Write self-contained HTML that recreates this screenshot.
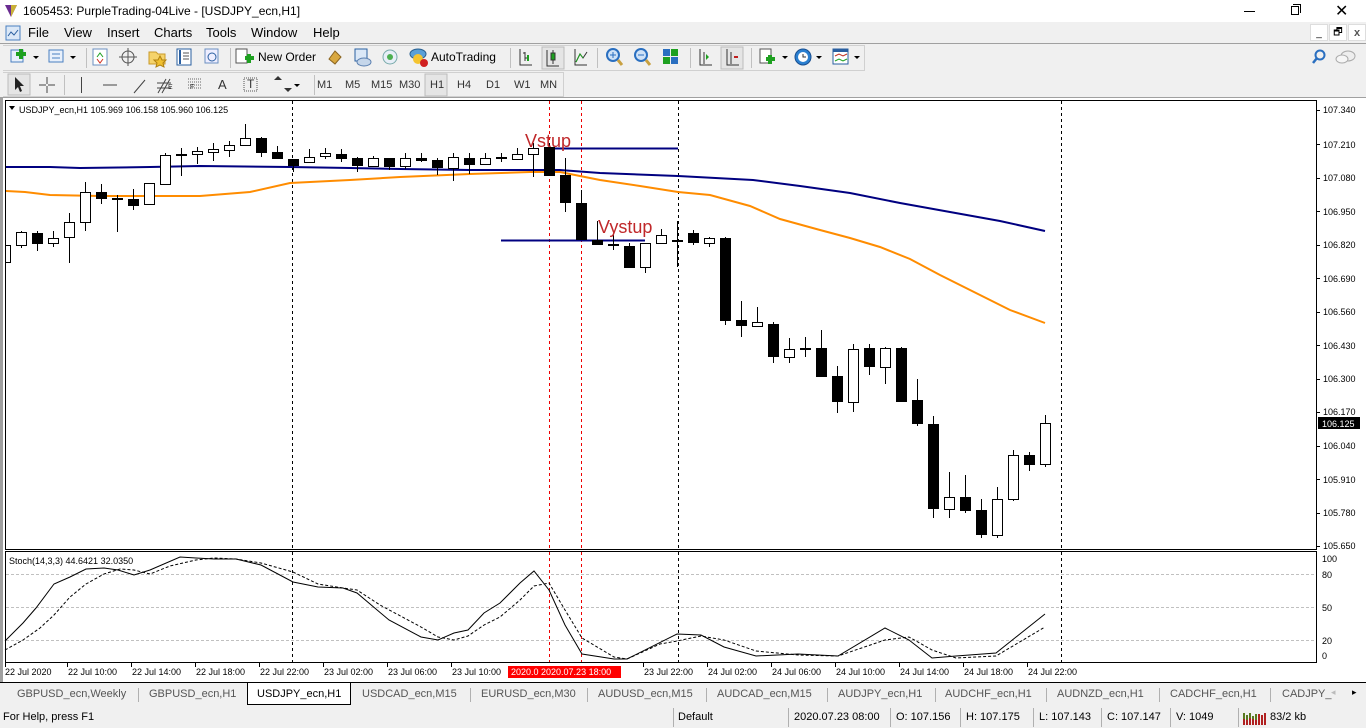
<!DOCTYPE html>
<html><head><meta charset="utf-8">
<style>
*{margin:0;padding:0;box-sizing:border-box}
body{width:1366px;height:728px;overflow:hidden;background:#f0f0f0;font-family:"Liberation Sans",sans-serif;position:relative}
.a{position:absolute;white-space:nowrap}
.t{font-size:12px;color:#000}
.m{font-size:13px;color:#000}
.tab{font-size:11px;color:#555}
.st{font-size:11px;color:#000}
.sep{position:absolute;width:1px;background:#b0b0b0}
</style></head><body>
<div class="a" style="left:0;top:0;width:1366px;height:22px;background:#fff"></div>
<svg class="a" style="left:4px;top:4px" width="14" height="14"><polygon points="1,1 13,1 7,13" fill="#6a2c91"/><polygon points="7,1 13,1 7,13" fill="#c9b037"/></svg>
<div class="a t" style="left:23px;top:4px">1605453: PurpleTrading-04Live - [USDJPY_ecn,H1]</div>
<div class="a" style="left:1244px;top:11px;width:11px;height:1px;background:#000"></div>
<div class="a" style="left:1291px;top:6px;width:8px;height:9px;border:1px solid #000"></div>
<div class="a" style="left:1293px;top:4px;width:8px;height:9px;border-top:1px solid #000;border-right:1px solid #000"></div>
<div class="a" style="left:1335px;top:1px;font-size:16px">✕</div>
<svg class="a" style="left:5px;top:25px" width="16" height="16"><rect x="1" y="1" width="14" height="14" fill="#dbe8f7" stroke="#4a7fc1"/><path d="M3 11l3-4 3 3 4-5" stroke="#2a5fa0" fill="none"/></svg>
<div class="a m" style="left:28px;top:25px">File</div>
<div class="a m" style="left:64px;top:25px">View</div>
<div class="a m" style="left:107px;top:25px">Insert</div>
<div class="a m" style="left:154px;top:25px">Charts</div>
<div class="a m" style="left:206px;top:25px">Tools</div>
<div class="a m" style="left:251px;top:25px">Window</div>
<div class="a m" style="left:313px;top:25px">Help</div>
<div class="a" style="left:1310px;top:24px;width:18px;height:17px;background:#fff;border:1px solid #ddd;font-size:10px;text-align:center;line-height:18px">_</div>
<div class="a" style="left:1329px;top:24px;width:18px;height:17px;background:#fff;border:1px solid #ddd;font-size:10px;text-align:center;line-height:15px">🗗</div>
<div class="a" style="left:1348px;top:24px;width:18px;height:17px;background:#fff;border:1px solid #ddd;font-size:11px;text-align:center;line-height:16px;font-weight:bold;color:#555">x</div>
<div class="a" style="left:0;top:43px;width:1366px;height:1px;background:#a0a0a0"></div>
<div class="a" style="left:3px;top:45px;width:862px;height:26px;border:1px solid #d0d0d0;border-left:none"></div>
<svg class="a" style="left:0;top:44px" width="870" height="28">
 <g fill="none" stroke-width="1">
 <rect x="11" y="6" width="12" height="12" fill="#e8f0fb" stroke="#4a7fc1"/><path d="M16 10h10M21 5v10" stroke="#1ea020" stroke-width="4"/>
 <path d="M33 12l3 3 3-3z" fill="#000"/>
 <rect x="49" y="6" width="14" height="12" fill="#e8f0fb" stroke="#4a7fc1"/><path d="M52 10h8M52 14h8" stroke="#4a7fc1"/>
 <path d="M70 12l3 3 3-3z" fill="#000"/>
 <rect x="93" y="5" width="14" height="16" fill="#fff" stroke="#6b8fc1"/><path d="M97 13l3-4 3 4" stroke="#1ea020"/><path d="M97 15l3 4 3-4" stroke="#d03020"/>
 <circle cx="128" cy="13" r="6" stroke="#555"/><path d="M128 4v18M119 13h18" stroke="#555"/>
 <path d="M149 8h7l2 2h7v10h-16z" fill="#f5d36b" stroke="#c99a2a"/><path d="M160 12l2 4 4 0-3 3 1 4-4-2-4 2 1-4-3-3h4z" fill="#f0c030" stroke="#b08010"/>
 <rect x="177" y="5" width="14" height="16" fill="#fff" stroke="#2a5fa0"/><path d="M180 6v14" stroke="#2a5fa0" stroke-width="2"/><path d="M183 9h6M183 12h6M183 15h6" stroke="#555"/>
 <rect x="205" y="5" width="13" height="14" fill="#eef" stroke="#6b8fc1"/><circle cx="212" cy="13" r="4" stroke="#2a5fa0"/>
 <rect x="236" y="5" width="11" height="14" fill="#fff" stroke="#555"/><path d="M245 14h9M249 10v9" stroke="#1ea020" stroke-width="4"/>
 <path d="M329 15l6-8 6 6-6 7z" fill="#d9a840" stroke="#8a6420"/>
 <rect x="355" y="5" width="12" height="12" fill="#dbe8f7" stroke="#2a5fa0"/><ellipse cx="364" cy="18" rx="7" ry="4" fill="#c5d6ea" stroke="#5a7fb0"/>
 <circle cx="390" cy="13" r="7" fill="#e7eef7" stroke="#7aa"/><circle cx="390" cy="13" r="3" fill="#4caf50"/>
 <ellipse cx="418" cy="10" rx="8" ry="5" fill="#5aa0d8" stroke="#2a6090"/><circle cx="418" cy="15" r="5" fill="#f4c430"/><circle cx="424" cy="19" r="4" fill="#d02020"/>
 <path d="M520 5v16h12M525 8v9M523 9h2M525 14h2" stroke="#333"/><path d="M528 11v6" stroke="#1ea020" stroke-width="2"/>
 <rect x="542" y="3" width="22" height="22" fill="#e5e5e5" stroke="#bbb"/><path d="M547 6v16h12M553 6v14" stroke="#333"/><rect x="551" y="9" width="4" height="7" fill="#1ea020" stroke="#333"/>
 <path d="M575 5v16h12M576 18l4-8 3 4 4-6" stroke="#333"/><path d="M576 18l4-8 3 4" stroke="#1ea020"/>
 <circle cx="613" cy="11" r="6" fill="#cfe2f7" stroke="#2a6fc0" stroke-width="2"/><path d="M618 16l4 5" stroke="#c8a040" stroke-width="3"/><path d="M610 11h6M613 8v6" stroke="#2a6fc0"/>
 <circle cx="641" cy="11" r="6" fill="#cfe2f7" stroke="#2a6fc0" stroke-width="2"/><path d="M646 16l4 5" stroke="#c8a040" stroke-width="3"/><path d="M638 11h6" stroke="#2a6fc0"/>
 <rect x="663" y="5" width="7" height="7" fill="#2a6fc0"/><rect x="671" y="5" width="7" height="7" fill="#1ea020"/><rect x="663" y="13" width="7" height="7" fill="#1ea020"/><rect x="671" y="13" width="7" height="7" fill="#2a6fc0"/>
 <path d="M700 5v16h12M704 8v12" stroke="#333"/><path d="M706 10l3 3-3 3z" fill="#1ea020"/>
 <rect x="721" y="3" width="22" height="22" fill="#e5e5e5" stroke="#bbb"/><path d="M727 5v16h12M731 8v12" stroke="#333"/><path d="M738 13h-4" stroke="#c02020" stroke-width="2"/>
 <rect x="760" y="5" width="11" height="14" fill="#fff" stroke="#555"/><path d="M766 15h9M770 11v9" stroke="#1ea020" stroke-width="4"/>
 <path d="M782 12l3 3 3-3z" fill="#000"/>
 <circle cx="803" cy="13" r="8" fill="#2a7fd0" stroke="#1a4f90"/><circle cx="803" cy="13" r="5" fill="#fff"/><path d="M803 10v3h3" stroke="#333"/>
 <path d="M816 12l3 3 3-3z" fill="#000"/>
 <rect x="833" y="5" width="15" height="15" fill="#fff" stroke="#2a5fa0"/><rect x="833" y="5" width="15" height="3" fill="#2a5fa0"/><path d="M835 12l4-2 4 2 4-2" stroke="#c03020"/><path d="M835 17l4-2 4 2 4-2" stroke="#1ea020"/>
 <path d="M854 12l3 3 3-3z" fill="#000"/>
 </g>
 <g stroke="#c0c0c0"><path d="M86.5 4v20M230.5 4v20M510.5 4v20M597.5 4v20M690.5 4v20M751.5 4v20"/></g>
</svg>
<div class="a t" style="left:258px;top:50px">New Order</div>
<div class="a t" style="left:431px;top:50px">AutoTrading</div>
<svg class="a" style="left:1310px;top:48px" width="50" height="20"><circle cx="10" cy="7" r="4.5" fill="none" stroke="#2a6fc0" stroke-width="2"/><path d="M7 10l-4 5" stroke="#2a6fc0" stroke-width="2.5"/><ellipse cx="38" cy="8" rx="7" ry="5" fill="#eee" stroke="#aaa"/><ellipse cx="32" cy="11" rx="6" ry="4" fill="#f6f6f6" stroke="#aaa"/></svg>
<div class="a" style="left:3px;top:72px;width:561px;height:25px;border:1px solid #d0d0d0;border-left:none"></div>
<svg class="a" style="left:0;top:72px" width="570" height="26">
 <rect x="8" y="2" width="22" height="21" fill="#e5e5e5" stroke="#bbb"/>
 <path d="M15 5v13l3-3 2 5 2-1-2-5h4z" fill="#222"/>
 <path d="M47 5v7M47 14v7M39 13h7M48 13h7" stroke="#444"/>
 <path d="M64.5 3v20M314.5 3v20" stroke="#c0c0c0"/>
 <path d="M81.5 5v16M103 13h14M134 21l11-13" stroke="#444"/>
 <path d="M158 21l8-14M162 21l8-14M157 11h14M157 16h14" stroke="#444"/>
 <path d="M188 7h14M188 10h14M188 13h14M188 16h14" stroke="#666" stroke-dasharray="1,1"/>
 <rect x="244" y="6" width="13" height="13" fill="none" stroke="#555" stroke-dasharray="1,1"/>
 <path d="M274 8l4-4 4 4zM284 16l4 4 4-4z" fill="#333"/><path d="M294 12l3 3 3-3z" fill="#000"/>
 <rect x="425" y="2" width="22" height="22" fill="#e5e5e5" stroke="#bbb"/>
</svg>
<div class="a" style="left:218px;top:77px;font-size:13px;color:#333">A</div>
<div class="a" style="left:247px;top:77px;font-size:12px;color:#333">T</div>
<div class="a" style="left:190px;top:84px;font-size:7px;color:#333">F</div>
<div class="a" style="left:168px;top:84px;font-size:7px;color:#333">E</div>
<div class="a t" style="left:317px;top:79px;font-size:11px;color:#333">M1</div>
<div class="a t" style="left:345px;top:79px;font-size:11px;color:#333">M5</div>
<div class="a t" style="left:371px;top:79px;font-size:11px;color:#333">M15</div>
<div class="a t" style="left:399px;top:79px;font-size:11px;color:#333">M30</div>
<div class="a t" style="left:430px;top:79px;font-size:11px;color:#333">H1</div>
<div class="a t" style="left:457px;top:79px;font-size:11px;color:#333">H4</div>
<div class="a t" style="left:486px;top:79px;font-size:11px;color:#333">D1</div>
<div class="a t" style="left:514px;top:79px;font-size:11px;color:#333">W1</div>
<div class="a t" style="left:540px;top:79px;font-size:11px;color:#333">MN</div>
<div class="a" style="left:0;top:97px;width:1366px;height:1px;background:#a0a0a0"></div>
<div class="a" style="left:0;top:98px;width:1366px;height:584px;background:#fff"></div>
<div class="a" style="left:0;top:98px;width:3px;height:584px;background:#a0a0a0"></div>
<svg class="a" style="left:0;top:0" width="1366" height="728" font-family="Liberation Sans, sans-serif">
 <defs><clipPath id="c1"><rect x="6" y="101" width="1310" height="448"/></clipPath></defs>
 <rect x="5.5" y="100.5" width="1311" height="449" fill="#fff" stroke="#000"/>
 <rect x="5.5" y="551.5" width="1311" height="111" fill="#fff" stroke="#000"/>
 <g stroke="#c0c0c0" stroke-dasharray="3,2"><path d="M6 574.5H1316M6 607.5H1316M6 640.5H1316"/></g>
 <g stroke="#000" stroke-dasharray="3,3"><path d="M292.5 101V549M678.5 101V549M1061.5 101V549M292.5 552V662M678.5 552V662M1061.5 552V662"/></g>
 <g stroke="#e00" stroke-dasharray="3,3"><path d="M549.5 101V549M581.5 101V549M549.5 552V662M581.5 552V662"/></g>
 <g clip-path="url(#c1)">
 <polyline fill="none" stroke="#ff8c00" stroke-width="2" points="5,191 25,192 50,195 100,196 155,196 200,196 250,192 290,183 350,180 400,177 470,174 530,172 560,172 600,180 640,186 678,192 710,195 750,206 780,219 820,230 850,238 880,247 910,259 940,275 970,290 1010,310 1045,323"/>
 <polyline fill="none" stroke="#000080" stroke-width="2" points="5,167 50,167 80,168 150,167 200,166 290,167 350,168 400,169 470,170 530,170 560,170 600,173 678,176 753,180 800,186 850,193 900,203 950,212 1000,221 1045,231"/>
 <path d="M546 148.5H678M501 240.5H645" stroke="#000080" stroke-width="2"/>
 <path stroke="#000" d="M5.5 243V264M21.5 231V248M37.5 231V251M53.5 231V247M69.5 213V263M85.5 182V231M101.5 184V204M117.5 195V232M133.5 189V210M149.5 183V205M165.5 153V185M181.5 148V176M197.5 147V164M213.5 143V161M229.5 141V157M245.5 124V145M261.5 137V157M277.5 146V159M293.5 159V172M309.5 149V162M325.5 148V159M341.5 149V162M357.5 157V172M373.5 156V166M389.5 158V170M405.5 153V169M421.5 153V162M437.5 158V175M453.5 153V181M469.5 153V174M485.5 153V164M501.5 153V162M517.5 148V159M533.5 143V177M549.5 143V176M565.5 158V212M581.5 190V240M597.5 221V245M613.5 233V250M629.5 243V268M645.5 243V273M661.5 229V243M677.5 221V267M693.5 230V245M709.5 237V247M725.5 237V325M741.5 301V337M757.5 307V327M773.5 322V363M789.5 338V363M805.5 337V357M821.5 330V377M837.5 366V413M853.5 344V412M869.5 344V375M885.5 347V384M901.5 347V402M917.5 379V426M933.5 416V518M949.5 472V518M965.5 475V513M981.5 499V538M997.5 487V538M1013.5 450V501M1029.5 452V471M1045.5 415V467"/>
 <g fill="#000">
 <rect x="32" y="233" width="11" height="11"/><rect x="96" y="192" width="11" height="7"/><rect x="128" y="199" width="11" height="7"/><rect x="256" y="138" width="11" height="15"/><rect x="272" y="152" width="11" height="7"/><rect x="288" y="159" width="11" height="7"/><rect x="336" y="154" width="11" height="5"/><rect x="352" y="158" width="11" height="8"/><rect x="384" y="158" width="11" height="9"/><rect x="416" y="158" width="11" height="3"/><rect x="432" y="160" width="11" height="8"/><rect x="464" y="158" width="11" height="7"/><rect x="544" y="147" width="11" height="29"/><rect x="560" y="175" width="11" height="28"/><rect x="576" y="203" width="11" height="37"/><rect x="592" y="240" width="11" height="5"/><rect x="624" y="246" width="11" height="22"/><rect x="688" y="233" width="11" height="10"/><rect x="720" y="238" width="11" height="83"/><rect x="736" y="320" width="11" height="6"/><rect x="768" y="324" width="11" height="33"/><rect x="816" y="348" width="11" height="29"/><rect x="832" y="376" width="11" height="26"/><rect x="864" y="348" width="11" height="19"/><rect x="896" y="348" width="11" height="54"/><rect x="912" y="400" width="11" height="24"/><rect x="928" y="424" width="11" height="85"/><rect x="960" y="497" width="11" height="14"/><rect x="976" y="510" width="11" height="25"/><rect x="1024" y="455" width="11" height="10"/>
 </g>
 <g fill="#fff" stroke="#000">
 <rect x="0.5" y="245.5" width="10" height="17"/><rect x="16.5" y="232.5" width="10" height="13"/><rect x="48.5" y="238.5" width="10" height="5"/><rect x="64.5" y="222.5" width="10" height="15"/><rect x="80.5" y="192.5" width="10" height="30"/><rect x="144.5" y="183.5" width="10" height="21"/><rect x="160.5" y="155.5" width="10" height="29"/><rect x="192.5" y="151.5" width="10" height="3"/><rect x="208.5" y="149.5" width="10" height="3"/><rect x="224.5" y="145.5" width="10" height="5"/><rect x="240.5" y="138.5" width="10" height="7"/><rect x="304.5" y="157.5" width="10" height="5"/><rect x="320.5" y="153.5" width="10" height="3"/><rect x="368.5" y="158.5" width="10" height="8"/><rect x="400.5" y="158.5" width="10" height="8"/><rect x="448.5" y="157.5" width="10" height="11"/><rect x="480.5" y="158.5" width="10" height="6"/><rect x="512.5" y="154.5" width="10" height="5"/><rect x="528.5" y="148.5" width="10" height="6"/><rect x="640.5" y="243.5" width="10" height="24"/><rect x="656.5" y="235.5" width="10" height="8"/><rect x="704.5" y="238.5" width="10" height="5"/><rect x="752.5" y="322.5" width="10" height="4"/><rect x="784.5" y="349.5" width="10" height="8"/><rect x="848.5" y="349.5" width="10" height="53"/><rect x="880.5" y="348.5" width="10" height="19"/><rect x="944.5" y="497.5" width="10" height="12"/><rect x="992.5" y="499.5" width="10" height="36"/><rect x="1008.5" y="455.5" width="10" height="44"/><rect x="1040.5" y="423.5" width="10" height="41"/>
 </g>
 <path stroke="#000" stroke-width="2" d="M112 199H123M176 155H187M496 158H507M608 245H619M672 241H683M800 349H811"/>
 <text x="525" y="147" font-size="18" fill="#c0282a">Vstup</text>
 <text x="598" y="233" font-size="18" fill="#c0282a">Vystup</text>
 </g>
 <polyline fill="none" stroke="#000" points="5,641 23,623 36,608 54,584 70,577 86,569 104,568 118,570 134,575 150,570 180,557 196,558 214,559 236,559 261,565 293,582 318,587 343,588 357,593 389,620 421,637 438,640 454,633 468,630 484,613 500,603 520,583 534,571 549,590 565,625 582,654 614,659 627,659 677,634 701,635 724,647 756,656 798,654 838,656 885,628 909,640 932,658 956,656 996,653 1045,614"/>
 <polyline fill="none" stroke="#000" stroke-dasharray="3,2" points="5,650 23,640 40,628 54,615 70,597 86,584 104,574 120,569 134,570 150,574 170,566 196,560 214,558 236,559 261,563 293,572 318,584 343,588 357,590 380,605 421,627 438,637 454,640 468,636 484,625 500,617 520,600 534,586 549,583 565,610 582,638 614,657 627,659 660,644 677,641 701,636 724,640 756,651 798,655 838,656 885,640 909,637 932,650 956,658 996,656 1045,627"/>
 <path d="M9 106l3 4 3-4z" fill="#000"/>
 <text x="19" y="113" font-size="9">USDJPY_ecn,H1  105.969 106.158 105.960 106.125</text>
 <text x="9" y="564" font-size="9">Stoch(14,3,3) 44.6421 32.0350</text>
 <g font-size="9" fill="#000">
 <text x="1323" y="113">107.340</text><text x="1323" y="148">107.210</text><text x="1323" y="181">107.080</text><text x="1323" y="215">106.950</text><text x="1323" y="248">106.820</text><text x="1323" y="282">106.690</text><text x="1323" y="315">106.560</text><text x="1323" y="349">106.430</text><text x="1323" y="382">106.300</text><text x="1323" y="415">106.170</text><text x="1323" y="449">106.040</text><text x="1323" y="483">105.910</text><text x="1323" y="516">105.780</text><text x="1323" y="549">105.650</text>
 <text x="1322" y="562">100</text><text x="1322" y="578">80</text><text x="1322" y="611">50</text><text x="1322" y="644">20</text><text x="1322" y="659">0</text>
 </g>
 <path stroke="#000" d="M1316 110.5h4M1316 144.5h4M1316 178.5h4M1316 211.5h4M1316 245.5h4M1316 278.5h4M1316 312.5h4M1316 345.5h4M1316 379.5h4M1316 412.5h4M1316 446.5h4M1316 479.5h4M1316 513.5h4M1316 546.5h4"/>
 <rect x="1318" y="417" width="42" height="12" fill="#000"/>
 <text x="1322" y="427" font-size="9" fill="#fff">106.125</text>
 <g font-size="9" fill="#000">
 <text x="5" y="675">22 Jul 2020</text><text x="68" y="675">22 Jul 10:00</text><text x="132" y="675">22 Jul 14:00</text><text x="196" y="675">22 Jul 18:00</text><text x="260" y="675">22 Jul 22:00</text><text x="324" y="675">23 Jul 02:00</text><text x="388" y="675">23 Jul 06:00</text><text x="452" y="675">23 Jul 10:00</text><text x="644" y="675">23 Jul 22:00</text><text x="708" y="675">24 Jul 02:00</text><text x="772" y="675">24 Jul 06:00</text><text x="836" y="675">24 Jul 10:00</text><text x="900" y="675">24 Jul 14:00</text><text x="964" y="675">24 Jul 18:00</text><text x="1028" y="675">24 Jul 22:00</text>
 </g>
 <path stroke="#000" d="M5.5 663v4M67.5 663v4M131.5 663v4M195.5 663v4M259.5 663v4M323.5 663v4M387.5 663v4M451.5 663v4M643.5 663v4M707.5 663v4M771.5 663v4M835.5 663v4M899.5 663v4M963.5 663v4M1027.5 663v4"/>
 <rect x="508" y="666" width="113" height="12" fill="#f00"/>
 <text x="511" y="675" font-size="9" fill="#fff">2020.0 2020.07.23 18:00</text>
 <path stroke="#000" d="M0 682.5H1366"/>
</svg>
<div class="a" style="left:0;top:683px;width:1366px;height:23px;background:#f0f0f0"></div>
<div class="a" style="left:247px;top:683px;width:104px;height:22px;background:#fff;border:1px solid #000;border-top:none"></div>
<div class="a tab" style="left:17px;top:688px">GBPUSD_ecn,Weekly</div>
<div class="a tab" style="left:149px;top:688px">GBPUSD_ecn,H1</div>
<div class="a tab" style="left:257px;top:688px;color:#000">USDJPY_ecn,H1</div>
<div class="a tab" style="left:362px;top:688px">USDCAD_ecn,M15</div>
<div class="a tab" style="left:481px;top:688px">EURUSD_ecn,M30</div>
<div class="a tab" style="left:598px;top:688px">AUDUSD_ecn,M15</div>
<div class="a tab" style="left:717px;top:688px">AUDCAD_ecn,M15</div>
<div class="a tab" style="left:838px;top:688px">AUDJPY_ecn,H1</div>
<div class="a tab" style="left:945px;top:688px">AUDCHF_ecn,H1</div>
<div class="a tab" style="left:1057px;top:688px">AUDNZD_ecn,H1</div>
<div class="a tab" style="left:1170px;top:688px">CADCHF_ecn,H1</div>
<div class="a tab" style="left:1282px;top:688px">CADJPY_</div>
<div class="a tab" style="left:1331px;top:687px;font-size:9px;color:#bbb">◂</div>
<div class="a tab" style="left:1352px;top:687px;font-size:9px;color:#000">▸</div>
<div class="sep" style="left:138px;top:688px;height:14px"></div>
<div class="sep" style="left:470px;top:688px;height:14px"></div>
<div class="sep" style="left:587px;top:688px;height:14px"></div>
<div class="sep" style="left:706px;top:688px;height:14px"></div>
<div class="sep" style="left:827px;top:688px;height:14px"></div>
<div class="sep" style="left:935px;top:688px;height:14px"></div>
<div class="sep" style="left:1046px;top:688px;height:14px"></div>
<div class="sep" style="left:1159px;top:688px;height:14px"></div>
<div class="sep" style="left:1270px;top:688px;height:14px"></div>
<div class="a st" style="left:3px;top:711px">For Help, press F1</div>
<div class="sep" style="left:673px;top:708px;height:19px"></div>
<div class="a st" style="left:678px;top:711px">Default</div>
<div class="sep" style="left:788px;top:708px;height:19px"></div>
<div class="a st" style="left:794px;top:711px">2020.07.23 08:00</div>
<div class="sep" style="left:890px;top:708px;height:19px"></div>
<div class="a st" style="left:896px;top:711px">O: 107.156</div>
<div class="sep" style="left:960px;top:708px;height:19px"></div>
<div class="a st" style="left:966px;top:711px">H: 107.175</div>
<div class="sep" style="left:1033px;top:708px;height:19px"></div>
<div class="a st" style="left:1039px;top:711px">L: 107.143</div>
<div class="sep" style="left:1101px;top:708px;height:19px"></div>
<div class="a st" style="left:1107px;top:711px">C: 107.147</div>
<div class="sep" style="left:1170px;top:708px;height:19px"></div>
<div class="a st" style="left:1176px;top:711px">V: 1049</div>
<div class="sep" style="left:1238px;top:708px;height:19px"></div>
<svg class="a" style="left:1243px;top:711px" width="24" height="14"><g stroke-width="2"><path d="M1 14V2M4 14V4M7 14V2M10 14V5M13 14V3" stroke="#5a7a20"/><path d="M1 14V8M4 14V9M7 14V7M10 14V8M13 14V9M16 14V3M19 14V4M22 14V2" stroke="#b02020"/></g></svg>
<div class="a st" style="left:1270px;top:711px">83/2 kb</div>
</body></html>
